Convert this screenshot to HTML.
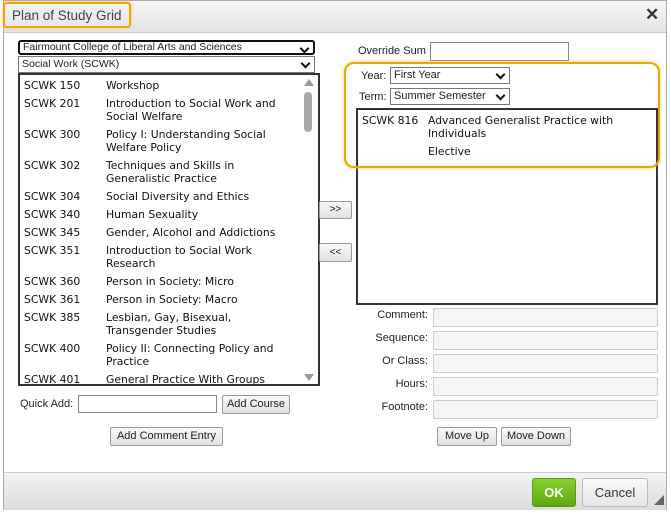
<!DOCTYPE html>
<html><head><style>
body{margin:0;width:671px;height:514px;background:#fff;position:relative;overflow:hidden;font-family:"Liberation Sans",Arial,sans-serif;font-size:11px;color:#222}
.a{position:absolute}
.v{font-family:"DejaVu Sans",Verdana,sans-serif;font-size:10.8px;color:#111;line-height:13px}
.btn{position:absolute;border:1px solid #999;border-radius:2px;background:linear-gradient(#f8f8f8,#e2e2e2);font-size:11px;text-align:center;box-sizing:border-box;color:#222}
.inp{position:absolute;border:1px solid #ccc;background:#f5f5f5;box-sizing:border-box;border-radius:2px}
.lbl{position:absolute;text-align:right;width:80px;font-size:11px}
.sel{position:absolute;border:1px solid #777;background:#fff;box-sizing:border-box;font-size:11px;padding-left:3px;line-height:15px}
.sel:after{content:"";position:absolute;right:5px;top:3px;width:5px;height:5px;border-right:2px solid #111;border-bottom:2px solid #111;transform:rotate(45deg)}
</style></head><body>
<div class="a" style="left:3px;top:0;width:664px;height:510px;border:1px solid #aaa;box-sizing:border-box;background:#fff"></div>
<div class="a" style="left:4px;top:1px;width:662px;height:31px;background:linear-gradient(#f6f6f6,#e4e4e4);border-bottom:1px solid #ccc"></div>
<div class="a" style="left:3px;top:2px;width:128px;height:26px;border:2px solid #f0a500;border-radius:4px;box-sizing:border-box;box-shadow:0 0 3px #f6c25a"></div>
<div class="a" style="left:12px;top:8px;font-size:13.5px;color:#444">Plan of Study Grid</div>
<div class="a" style="left:645px;top:5px;font-size:17px;font-weight:bold;color:#333">✕</div>

<div class="sel" style="left:18px;top:40px;width:297px;height:15px;border:2px solid #111;border-radius:3px;line-height:11px;font-size:10.5px">Fairmount College of Liberal Arts and Sciences</div>
<div class="sel" style="left:18px;top:56px;width:297px;height:17px;font-size:10.5px;line-height:14px">Social Work (SCWK)</div>

<div class="a" style="left:18px;top:73px;width:302px;height:313px;border:2px solid #333;box-sizing:border-box;background:#fff"></div>
<div class="a" style="left:304px;top:92px;width:8px;height:40px;background:#a9a9a9;border-radius:4px"></div>
<div class="a" style="left:304px;top:79px;width:0;height:0;border-left:5px solid transparent;border-right:5px solid transparent;border-bottom:7px solid #999"></div>
<div class="a" style="left:304px;top:374px;width:0;height:0;border-left:5px solid transparent;border-right:5px solid transparent;border-top:7px solid #999"></div>
<div class="v a" style="left:24px;top:79px">SCWK 150</div><div class="v a" style="left:106px;top:79px">Workshop</div>
<div class="v a" style="left:24px;top:97px">SCWK 201</div><div class="v a" style="left:106px;top:97px">Introduction to Social Work and<br>Social Welfare</div>
<div class="v a" style="left:24px;top:128px">SCWK 300</div><div class="v a" style="left:106px;top:128px">Policy I: Understanding Social<br>Welfare Policy</div>
<div class="v a" style="left:24px;top:159px">SCWK 302</div><div class="v a" style="left:106px;top:159px">Techniques and Skills in<br>Generalistic Practice</div>
<div class="v a" style="left:24px;top:190px">SCWK 304</div><div class="v a" style="left:106px;top:190px">Social Diversity and Ethics</div>
<div class="v a" style="left:24px;top:208px">SCWK 340</div><div class="v a" style="left:106px;top:208px">Human Sexuality</div>
<div class="v a" style="left:24px;top:226px">SCWK 345</div><div class="v a" style="left:106px;top:226px">Gender, Alcohol and Addictions</div>
<div class="v a" style="left:24px;top:244px">SCWK 351</div><div class="v a" style="left:106px;top:244px">Introduction to Social Work<br>Research</div>
<div class="v a" style="left:24px;top:275px">SCWK 360</div><div class="v a" style="left:106px;top:275px">Person in Society: Micro</div>
<div class="v a" style="left:24px;top:293px">SCWK 361</div><div class="v a" style="left:106px;top:293px">Person in Society: Macro</div>
<div class="v a" style="left:24px;top:311px">SCWK 385</div><div class="v a" style="left:106px;top:311px">Lesbian, Gay, Bisexual,<br>Transgender Studies</div>
<div class="v a" style="left:24px;top:342px">SCWK 400</div><div class="v a" style="left:106px;top:342px">Policy II: Connecting Policy and<br>Practice</div>
<div class="v a" style="left:24px;top:373px">SCWK 401</div><div class="v a" style="left:106px;top:373px">General Practice With Groups</div>

<div class="a" style="left:20px;top:398px">Quick Add:</div>
<div class="a" style="left:78px;top:395px;width:139px;height:18px;border:1px solid #888;box-sizing:border-box"></div>
<div class="btn" style="left:222px;top:395px;width:68px;height:19px;line-height:17px">Add Course</div>
<div class="btn" style="left:110px;top:427px;width:113px;height:19px;line-height:17px">Add Comment Entry</div>

<div class="btn" style="left:319px;top:201px;width:33px;height:18px;line-height:16px;font-size:10px">&gt;&gt;</div>
<div class="btn" style="left:319px;top:243px;width:33px;height:19px;line-height:17px;font-size:10px">&lt;&lt;</div>

<div class="a" style="left:358px;top:45px">Override Sum</div>
<div class="a" style="left:430px;top:42px;width:139px;height:19px;border:1px solid #888;box-sizing:border-box"></div>
<div class="a" style="left:361px;top:70px">Year:</div>
<div class="sel" style="left:390px;top:67px;width:120px;height:17px">First Year</div>
<div class="a" style="left:359px;top:91px">Term:</div>
<div class="sel" style="left:390px;top:88px;width:120px;height:17px">Summer Semester</div>
<div class="a" style="left:356px;top:108px;width:302px;height:197px;border:2px solid #333;box-sizing:border-box;background:#fff"></div>
<div class="v a" style="left:362px;top:114px">SCWK 816</div><div class="v a" style="left:428px;top:114px">Advanced Generalist Practice with<br>Individuals</div>
<div class="v a" style="left:428px;top:145px">Elective</div>
<div class="a" style="left:344px;top:62px;width:316px;height:106px;border:2px solid #f0a500;border-radius:10px;box-sizing:border-box;box-shadow:0 0 3px #f6c25a"></div>

<div class="lbl" style="left:348px;top:309px">Comment:</div><div class="inp" style="left:433px;top:308px;width:225px;height:19px"></div>
<div class="lbl" style="left:348px;top:332px">Sequence:</div><div class="inp" style="left:433px;top:331px;width:225px;height:19px"></div>
<div class="lbl" style="left:348px;top:355px">Or Class:</div><div class="inp" style="left:433px;top:354px;width:225px;height:19px"></div>
<div class="lbl" style="left:348px;top:378px">Hours:</div><div class="inp" style="left:433px;top:377px;width:225px;height:19px"></div>
<div class="lbl" style="left:348px;top:401px">Footnote:</div><div class="inp" style="left:433px;top:400px;width:225px;height:19px"></div>
<div class="btn" style="left:437px;top:427px;width:60px;height:19px;line-height:17px">Move Up</div>
<div class="btn" style="left:501px;top:427px;width:70px;height:19px;line-height:17px">Move Down</div>

<div class="a" style="left:4px;top:472px;width:662px;height:37px;background:linear-gradient(#f4f4f4,#dcdcdc);border-top:1px solid #ccc"></div>
<div class="a" style="left:532px;top:478px;width:44px;height:29px;background:linear-gradient(#8ad12f,#5ea812);border:1px solid #5a9a1a;border-radius:3px;box-sizing:border-box;color:#fff;font-weight:bold;font-size:13px;text-align:center;line-height:27px">OK</div>
<div class="a" style="left:582px;top:478px;width:66px;height:29px;background:linear-gradient(#fafafa,#e6e6e6);border:1px solid #bbb;border-radius:3px;box-sizing:border-box;font-size:13px;text-align:center;line-height:27px;color:#333">Cancel</div>
<div class="a" style="left:654px;top:495px;width:0;height:0;border-left:10px solid transparent;border-bottom:10px solid #666"></div>
</body></html>
